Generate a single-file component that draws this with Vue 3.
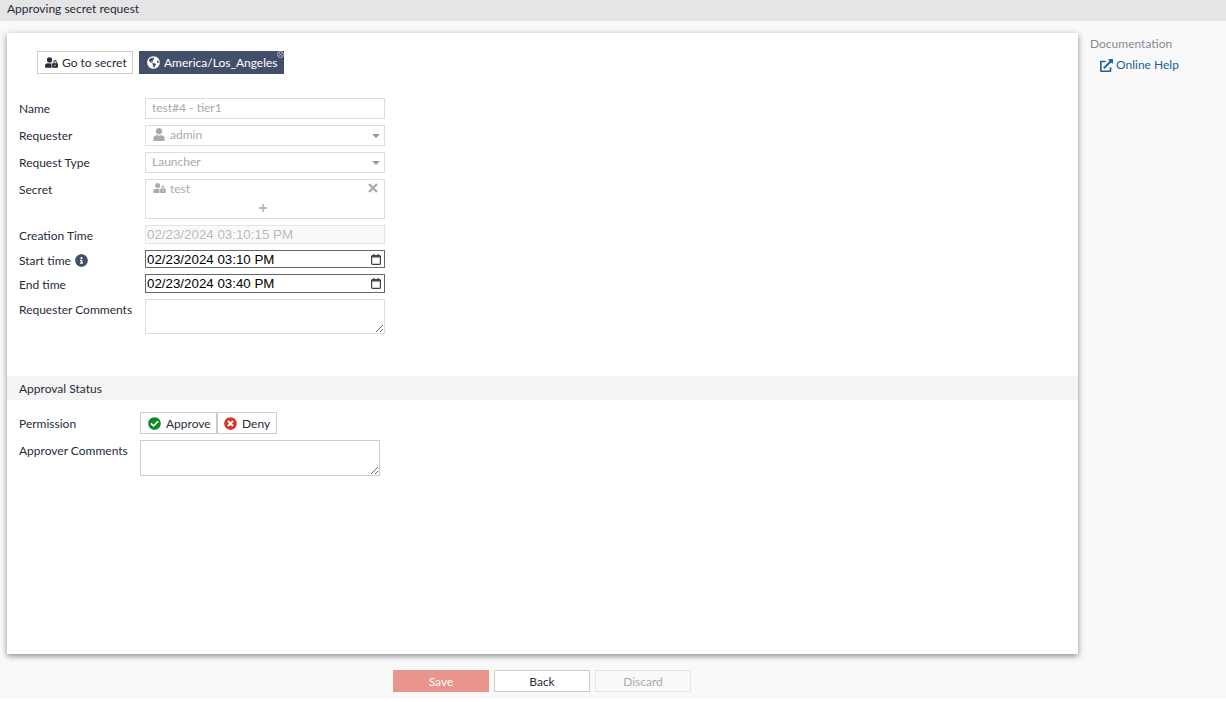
<script setup>
const icons = {
  userLock: 'M224 256A128 128 0 1 0 96 128a128 128 0 0 0 128 128zm96 64a63.08 63.08 0 0 1 8.100-30.500c-4.800-.5-9.500-1.500-14.500-1.500h-16.700a174.080 174.080 0 0 1-145.800 0h-16.700A134.430 134.430 0 0 0 0 422.400V464a48 48 0 0 0 48 48h280.900a63.540 63.540 0 0 1-8.900-32zm288-32h-32v-80a80 80 0 0 0-160 0v80h-32a32 32 0 0 0-32 32v160a32 32 0 0 0 32 32h224a32 32 0 0 0 32-32V320a32 32 0 0 0-32-32zM496 432a32 32 0 1 1 32-32 32 32 0 0 1-32 32zm32-144h-64v-80a32 32 0 0 1 64 0z',
  globe: 'M248 8C111.03 8 0 119.03 0 256s111.03 248 248 248 248-111.03 248-248S384.97 8 248 8zm82.29 357.6c-3.9 3.88-7.99 7.95-11.31 11.28-2.99 3-5.1 6.7-6.17 10.71-1.51 5.66-2.73 11.38-4.77 16.87l-17.39 46.85c-13.76 3-28 4.69-42.65 4.69v-27.38c1.69-12.62-7.64-36.26-22.63-51.25-6-6-9.37-14.14-9.37-22.63v-32.01c0-11.64-6.27-22.34-16.46-27.97-14.37-7.95-34.81-19.06-48.81-26.11-11.48-5.78-22.1-13.14-31.65-21.75l-.8-.72a114.792 114.792 0 0 1-18.06-20.74c-9.38-13.77-24.66-36.42-34.59-51.14 20.47-45.5 57.36-82.04 103.2-101.89l24.01 12.01C203.48 89.74 216 82.01 216 70.11v-11.3c7.99-1.29 16.12-2.11 24.45-2.42l28.3 28.3c6.25 6.25 6.25 16.38 0 22.63L264 112l-10.34 10.34c-3.12 3.12-3.12 8.19 0 11.31l4.69 4.69c3.12 3.12 3.12 8.19 0 11.31l-8 8a8.008 8.008 0 0 1-5.66 2.34h-8.99c-2.08 0-4.08.81-5.58 2.27l-9.92 9.65a8.008 8.008 0 0 0-1.58 9.31l15.59 31.19c2.66 5.32-1.21 11.58-7.15 11.58h-5.64c-1.93 0-3.79-.7-5.24-1.96l-9.28-8.06a16.017 16.017 0 0 0-15.55-3.1l-31.17 10.39a11.95 11.95 0 0 0-8.17 11.34c0 4.53 2.56 8.66 6.61 10.69l11.08 5.54c9.41 4.71 19.79 7.16 30.31 7.16s22.59 27.29 32 32h66.75c8.49 0 16.62 3.37 22.63 9.37l13.69 13.69a30.503 30.503 0 0 1 8.93 21.57 46.536 46.536 0 0 1-13.72 32.98zM417 274.25c-5.79-1.45-10.84-5-14.15-9.97l-17.98-26.97a23.97 23.97 0 0 1 0-26.62l19.59-29.38c2.32-3.47 5.5-6.29 9.24-8.15l12.98-6.49C445.01 198.48 456 225.92 456 256c0 8.67-1.06 17.08-2.73 25.26L417 274.25z',
  check: 'M504 256c0 136.967-111.033 248-248 248S8 392.967 8 256 119.033 8 256 8s248 111.033 248 248zM227.314 387.314l184-184c6.248-6.248 6.248-16.379 0-22.627l-22.627-22.627c-6.248-6.249-16.379-6.249-22.628 0L216 308.118l-70.059-70.059c-6.248-6.248-16.379-6.248-22.628 0l-22.627 22.627c-6.248 6.248-6.248 16.379 0 22.627l104 104c6.249 6.249 16.379 6.249 22.628.001z',
  times: 'M256 8C119 8 8 119 8 256s111 248 248 248 248-111 248-248S393 8 256 8zm121.6 313.1c4.7 4.7 4.7 12.3 0 17L338 377.6c-4.7 4.7-12.3 4.7-17 0L256 312l-65.1 65.6c-4.7 4.7-12.3 4.7-17 0L134.4 338c-4.7-4.7-4.7-12.3 0-17l65.6-65-65.6-65.1c-4.7-4.7-4.7-12.3 0-17l39.6-39.6c4.7-4.7 12.3-4.7 17 0l65 65.7 65.1-65.6c4.7-4.7 12.3-4.7 17 0l39.6 39.6c4.7 4.7 4.7 12.3 0 17L312 256l65.6 65.1z',
  info: 'M256 8C119.043 8 8 119.083 8 256c0 136.997 111.043 248 248 248s248-111.003 248-248C504 119.083 392.957 8 256 8zm0 110c23.196 0 42 18.804 42 42s-18.804 42-42 42-42-18.804-42-42 18.804-42 42-42zm56 254c0 6.627-5.373 12-12 12h-88c-6.627 0-12-5.373-12-12v-24c0-6.627 5.373-12 12-12h12v-64h-12c-6.627 0-12-5.373-12-12v-24c0-6.627 5.373-12 12-12h64c6.627 0 12 5.373 12 12v100h12c6.627 0 12 5.373 12 12v24z',
  link: 'M432 320h-32a16 16 0 0 0-16 16v112H64V128h144a16 16 0 0 0 16-16V80a16 16 0 0 0-16-16H48a48 48 0 0 0-48 48v352a48 48 0 0 0 48 48h352a48 48 0 0 0 48-48V336a16 16 0 0 0-16-16zM488 0H360c-21.37 0-32.05 25.91-17 41l35.73 35.73L135 320.37a24 24 0 0 0 0 34L157.67 377a24 24 0 0 0 34 0l243.61-243.68L471 169c15 15 41 4.5 41-17V24a24 24 0 0 0-24-24z',
  user: 'M224 256c70.700 0 128-57.300 128-128S294.700 0 224 0 96 57.300 96 128s57.300 128 128 128zm89.600 32h-16.700c-22.200 10.200-46.900 16-72.900 16s-50.600-5.800-72.900-16h-16.700C60.200 288 0 348.200 0 422.400V464c0 26.500 21.500 48 48 48h352c26.500 0 48-21.500 48-48v-41.600c0-74.200-60.200-134.400-134.400-134.400z',
}
</script>

<template>
  <div class="page">
    <div class="topbar">Approving secret request</div>

    <div class="main">
      <div class="column">
        <div class="card">
          <div class="toolbar">
            <button class="btn-secret">
              <svg class="ic-lock" viewBox="0 0 640 512"><path :d="icons.userLock" /></svg>
              Go to secret
            </button>
            <div class="tz">
              <svg class="ic-globe" viewBox="0 0 496 512"><path :d="icons.globe" /></svg>
              America/Los_Angeles
              <svg class="tz-x" viewBox="0 0 8 8"><circle cx="4" cy="4" r="3.4" /><path d="M2.500 2.500l3 3M5.500 2.500l-3 3" /></svg>
            </div>
          </div>

          <div class="form">
            <div class="row">
              <label>Name</label>
              <input class="field h21 name" disabled value="test#4 - tier1" />
            </div>
            <div class="row">
              <label>Requester</label>
              <div class="field h21 select">
                <svg class="ic-user" viewBox="0 0 448 512"><path :d="icons.user" /></svg>
                <span>admin</span>
                <i class="caret"></i>
              </div>
            </div>
            <div class="row">
              <label>Request Type</label>
              <div class="field h21 select">
                <span>Launcher</span>
                <i class="caret"></i>
              </div>
            </div>
            <div class="row">
              <label>Secret</label>
              <div class="field secret">
                <div class="secret-item">
                  <svg class="ic-lock-s" viewBox="0 0 640 512"><path :d="icons.userLock" /></svg>
                  <span>test</span>
                  <svg class="ic-x" viewBox="0 0 10 10"><path d="M1 1l8 8M9 1l-8 8" /></svg>
                </div>
                <svg class="ic-plus" viewBox="0 0 10 10"><path d="M5 1v8M1 5h8" /></svg>
              </div>
            </div>
            <div class="row">
              <label>Creation Time</label>
              <input class="field created" disabled value="02/23/2024 03:10:15 PM" />
            </div>
            <div class="row">
              <label>Start time
                <svg class="ic-info" viewBox="0 0 512 512"><path :d="icons.info" /></svg>
              </label>
              <div class="date">
                <input value="02/23/2024 03:10 PM" />
                <svg class="ic-cal" viewBox="0 0 10 11"><rect x=".6" y="1.600" width="8.800" height="8.800" rx="1" /><path class="bar" d="M.6 1.600h8.800v2H.6zM2.200 0h1.200v2H2.200zM6.600 0h1.200v2H6.600z" /></svg>
              </div>
            </div>
            <div class="row">
              <label>End time</label>
              <div class="date tall">
                <input value="02/23/2024 03:40 PM" />
                <svg class="ic-cal" viewBox="0 0 10 11"><rect x=".6" y="1.600" width="8.800" height="8.800" rx="1" /><path class="bar" d="M.6 1.600h8.800v2H.6zM2.200 0h1.200v2H2.200zM6.600 0h1.200v2H6.600z" /></svg>
              </div>
            </div>
            <div class="row">
              <label>Requester Comments</label>
              <textarea class="field area"></textarea>
            </div>
          </div>

          <div class="band">Approval Status</div>

          <div class="form approval">
            <div class="row">
              <label class="perm-label">Permission</label>
              <div class="perm">
                <button class="perm-btn">
                  <svg class="ic-perm green" viewBox="0 0 512 512"><path :d="icons.check" /></svg>
                  Approve
                </button>
                <button class="perm-btn">
                  <svg class="ic-perm red" viewBox="0 0 512 512"><path :d="icons.times" /></svg>
                  Deny
                </button>
              </div>
            </div>
            <div class="row">
              <label>Approver Comments</label>
              <textarea class="field area big"></textarea>
            </div>
          </div>
        </div>

        <div class="footer">
          <button class="foot save">Save</button>
          <button class="foot back">Back</button>
          <button class="foot discard">Discard</button>
        </div>
      </div>

      <aside class="side">
        <div class="side-title">Documentation</div>
        <a class="side-link">
          <svg class="ic-link" viewBox="0 0 512 512"><path :d="icons.link" /></svg>
          Online Help
        </a>
      </aside>
    </div>
  </div>
</template>

<style scoped>
.page {
  height: 699px;
  display: flex;
  flex-direction: column;
  background: #f9f9f9;
  font-family: Lato, sans-serif;
  font-size: 12px;
  color: #262c3a;
}
.topbar {
  height: 21px;
  line-height: 18px;
  padding-left: 7px;
  background: #e5e5e5;
}
.main {
  display: flex;
  flex: 1;
  padding: 12px 0 0 7px;
}
.column {
  width: 1071px;
}
.card {
  height: 621px;
  box-sizing: border-box;
  padding-top: 18px;
  background: #fff;
  box-shadow: 0 2px 6px rgba(0, 0, 0, 0.45);
}
.toolbar {
  display: flex;
  gap: 6px;
  padding-left: 30px;
}
.btn-secret {
  display: flex;
  align-items: center;
  gap: 4px;
  width: 96px;
  height: 23px;
  padding: 0 0 0 7px;
  border: 1px solid #ccc;
  background: #fff;
  font: inherit;
  color: inherit;
  white-space: nowrap;
}
.ic-lock {
  flex: none;
  width: 13px;
  height: 11px;
  fill: #262c3a;
}
.tz {
  position: relative;
  display: flex;
  align-items: center;
  gap: 4px;
  width: 145px;
  height: 23px;
  box-sizing: border-box;
  padding-left: 8px;
  background: #434f6a;
  color: #fff;
  white-space: nowrap;
}
.ic-globe {
  flex: none;
  width: 13px;
  height: 13px;
  fill: #fff;
}
.tz-x {
  position: absolute;
  top: 0;
  right: 0;
  width: 7px;
  height: 7px;
  fill: none;
  stroke: #c4c8d2;
  stroke-width: 1;
}
.form {
  display: flex;
  flex-direction: column;
  gap: 6px;
  margin-top: 24px;
  padding-left: 12px;
}
.row {
  display: flex;
  align-items: flex-start;
}
.row label {
  display: flex;
  align-items: center;
  gap: 4px;
  width: 126px;
  flex: none;
  margin-bottom: -3px;
  line-height: 21px;
}
.field {
  width: 240px;
  box-sizing: border-box;
  border: 1px solid #ddd;
  border-radius: 0;
  background: #fff;
  font: inherit;
  color: #aaa;
  outline: none;
}
.h21 {
  height: 21px;
  padding: 0 6px;
}
.name {
  padding-bottom: 2px;
}
input.field:disabled {
  color: #aaa;
}
.select {
  position: relative;
  display: flex;
  align-items: center;
  gap: 5px;
  line-height: 17px;
  padding-bottom: 3px;
}
.ic-user {
  flex: none;
  width: 12px;
  height: 13px;
  margin-left: 1px;
  fill: #aaa;
}
.caret {
  position: absolute;
  right: 4px;
  top: 8px;
  border-left: 4.500px solid transparent;
  border-right: 4.500px solid transparent;
  border-top: 4.500px solid #999;
}
.secret {
  height: 40px;
  padding: 0 6px 0 7px;
}
.secret-item {
  display: flex;
  align-items: center;
  gap: 4px;
  height: 16px;
}
.ic-lock-s {
  flex: none;
  width: 13px;
  height: 10px;
  fill: #aaa;
}
.ic-x {
  width: 10px;
  height: 10px;
  margin-left: auto;
  fill: none;
  stroke: #aaa;
  stroke-width: 2.400;
}
.ic-plus {
  display: block;
  width: 10px;
  height: 10px;
  margin: 7px 0 0 105px;
  fill: none;
  stroke: #aaa;
  stroke-width: 1.400;
}
.created {
  height: 19px;
  padding: 0 1px;
  border-color: #e5e5e5;
  background: #fafafa;
  font-family: "Liberation Sans", Arial, sans-serif;
  font-size: 13.330px;
}
input.created:disabled {
  color: #bbb;
}
.date {
  display: flex;
  align-items: center;
  width: 240px;
  height: 18px;
  box-sizing: border-box;
  padding: 0 3px 0 1px;
  border: 1px solid #666;
  background: #fff;
}
.tall {
  height: 19px;
}
.date input {
  flex: 1;
  min-width: 0;
  padding: 0;
  border: none;
  outline: none;
  background: transparent;
  font-family: "Liberation Sans", Arial, sans-serif;
  font-size: 13.330px;
  color: #000;
}
.ic-cal {
  flex: none;
  width: 10px;
  height: 11px;
  fill: none;
  stroke: #444;
  stroke-width: 1.200;
}
.ic-cal .bar {
  fill: #444;
  stroke: none;
}
.ic-info {
  flex: none;
  width: 13px;
  height: 13px;
  fill: #434f6a;
}
.area {
  display: block;
  height: 35px;
  padding: 2px 6px;
  resize: vertical;
}
.band {
  height: 24px;
  margin-top: 42px;
  padding-left: 12px;
  line-height: 26px;
  background: #f4f4f4;
}
.approval {
  margin-top: 12px;
}
.approval label {
  width: 121px;
}
.approval .perm-label {
  padding-top: 1px;
}
.perm {
  display: flex;
}
.perm-btn {
  display: flex;
  align-items: center;
  gap: 5px;
  height: 22px;
  padding: 0 0 0 7px;
  border: 1px solid #ccc;
  background: #fff;
  font: inherit;
  color: inherit;
}
.perm-btn:first-child {
  width: 77px;
}
.perm-btn:last-child {
  width: 60px;
  padding-left: 6px;
}
.ic-perm {
  flex: none;
  width: 13px;
  height: 13px;
}
.green {
  fill: #0a8a22;
}
.red {
  fill: #d9342b;
}
.big {
  height: 36px;
  border-color: #ccc;
}
.footer {
  display: flex;
  justify-content: center;
  gap: 5px;
  margin-top: 16px;
  padding-right: 1px;
}
.foot {
  width: 96px;
  height: 22px;
  padding: 0;
  border: 1px solid #ccc;
  background: #fff;
  font: inherit;
  color: inherit;
}
.save {
  border-color: #e8958e;
  background: #e8958e;
  color: #fff;
}
.discard {
  border-color: #e5e5e5;
  background: #f9f9f9;
  color: #aaa;
}
.side {
  padding: 2px 0 0 12px;
}
.side-title {
  color: #8a8a94;
  line-height: 18px;
}
.side-link {
  display: flex;
  align-items: center;
  gap: 3px;
  margin: 3px 0 0 10px;
  line-height: 18px;
  color: #1f5f93;
}
.ic-link {
  flex: none;
  width: 13px;
  height: 13px;
  fill: #1f5f93;
}
</style>

<style>
body {
  background: #fff;
}
</style>
